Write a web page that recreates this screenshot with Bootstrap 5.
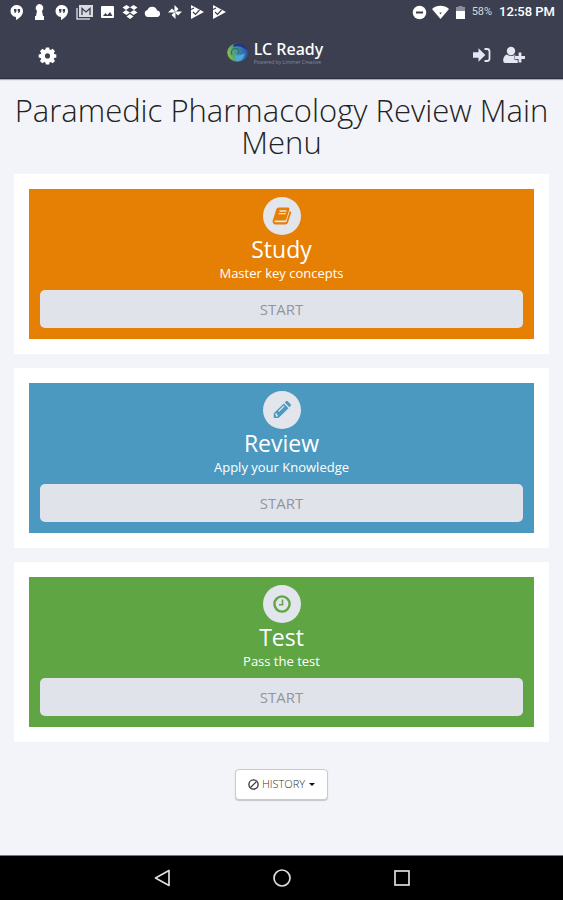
<!DOCTYPE html>
<html lang="en">
<head>
<meta charset="utf-8">
<meta name="viewport" content="width=device-width, initial-scale=1">
<title>LC Ready</title>
<link href="https://cdn.jsdelivr.net/npm/bootstrap@5.3.0/dist/css/bootstrap.min.css" rel="stylesheet">
<style>
body { font-family: "Open Sans", sans-serif; background: #f3f4f9; color: #222; }
svg { display: block; flex: none; }
.app-top { background: #3c3f50; color: #fff; border-bottom: 1px solid #2d303d; box-shadow: 0 1px 1px #a9abb4; }
.status-bar { height: 24px; padding: 0 8px 0 9px; font-family: Roboto, sans-serif; }
.status-icons { gap: 6px; }
.status-side { gap: 5px; }
.battery-text { font-size: 11px; color: #d5d7de; padding-right: 2px; }
.clock-text { font-size: 13px; font-weight: 500; }
.app-nav { height: 54px; padding: 8px 36px 0; }
.nav-side { flex: 1 1 0; }
.icon-btn { padding: 2px; line-height: 1; color: #e4e7f3; }
.icon-btn:hover { color: #fff; }
.brand { gap: 5px; color: #fff; padding: 0 14px 4px 0; }
.brand-name { font-family: "Noto Sans", sans-serif; font-size: 16px; line-height: 18px; font-weight: 500; }
.brand-tag { font-size: 5px; line-height: 8px; color: #85899a; }
.page-title { font-size: 31px; line-height: 32px; font-weight: 300; padding: 15px 8px 16px; }
.menu-list { padding: 0 14px; gap: 14px; }
.menu-card { background: #fff; padding: 15px; }
.panel { padding: 8px 11px 11px; color: #fff; }
.panel-study { background: #e68004; color: #e68004; }
.panel-review { background: #4b99c0; color: #4b99c0; }
.panel-test { background: #60a544; color: #60a544; }
.panel-icon { width: 38px; height: 38px; background: #e2e5ec; }
.panel-title { font-size: 23px; line-height: 28px; font-weight: 400; color: #fff; }
.panel-text { font-size: 13px; line-height: 20px; color: #fff; font-weight: 500; }
.start-btn { height: 38px; margin-top: 7px; padding: 0; background: #e0e4ea; color: #92959c; font-size: 15px; border-radius: 5px; border: 0; }
.start-btn:hover { background: #d5dae2; color: #7c8088; }
.history-btn { height: 31px; gap: 3px; padding: 0 12px; background: #fff; border: 1px solid #c9cad0; border-radius: 4px; font-size: 11px; font-weight: 300; color: #333; box-shadow: 0 1px 1px #c4c5ca; }
.history-btn::after { margin-left: 1px; color: #111; }
.history-row { padding: 27px 0; }
.system-nav { height: 45px; background: #000; border-top: 1px solid #777; }
.system-nav .btn { width: 120px; padding: 0; }
</style>
</head>
<body class="d-flex flex-column min-vh-100">
<svg class="d-none" aria-hidden="true">
  <symbol id="hangouts" viewBox="0 0 16 16"><path fill="#fff" d="M8 1a6 6 0 0 0-1 12v3c4-2 7-5 7-9a6 6 0 0 0-6-6z"/><path fill="#3c3f50" d="M5 5h2.400v2.500L6.300 9H5.300l.7-1.500H5zm3.700 0h2.400v2.500L10 9H9l.7-1.500h-1z"/></symbol>
  <symbol id="play" viewBox="0 0 16 16"><path fill="#fff" d="M2 1l13 7-13 7z"/><path fill="none" stroke="#3c3f50" stroke-width="1.200" d="M4 8l2.500 2.500L10.500 6M2 5.500l3-1.500"/></symbol>
</svg>

<header class="app-top">
  <div class="status-bar d-flex align-items-center justify-content-between">
    <div class="status-icons d-flex align-items-center" aria-hidden="true">
      <svg width="16" height="16"><use href="#hangouts"/></svg>
      <svg width="17" height="16" viewBox="0 0 17 16"><path fill="#fff" d="M8.500 0a4 4 0 0 1 2.500 7l1 5h1v4H4v-4h1l1-5a4 4 0 0 1 2.500-7z"/></svg>
      <svg width="16" height="16"><use href="#hangouts"/></svg>
      <svg width="17" height="16" viewBox="0 0 17 16"><path fill="none" stroke="#c9cbd3" stroke-width="1.500" d="M1 4v11h13"/><path fill="#d9dbe1" d="M3 1h14v12H3z"/><path fill="none" stroke="#3c3f50" stroke-width="1.300" d="M6 11V4.500L10 8l4-3.500V11"/></svg>
      <svg width="17" height="16" viewBox="0 0 17 16"><rect x="2" y="2" width="13" height="12" rx="1" fill="#fff"/><path fill="#3c3f50" d="M4 12l2.500-3 2 2 2.500-3 2.500 4z"/></svg>
      <svg width="16" height="16" viewBox="0 0 16 16"><path fill="#fff" d="M4.500 1L8 3.300 4 6 .5 3.500zM11.500 1l4 2.500L12 6 8 3.300zM4 6l4 2.500-3.500 2.500L.5 8.500zM12 6l3.500 2.500-4 2.500L8 8.500zM8 10l3.500 2.500L8 15l-3.500-2.500z"/></svg>
      <svg width="17" height="16" viewBox="0 0 17 16"><path fill="#fff" d="M4 13a3.500 3.500 0 0 1-.5-6.900A5 5 0 0 1 13 6.500 3.300 3.300 0 0 1 13.500 13z"/></svg>
      <svg width="16" height="16" viewBox="0 0 16 16"><g fill="#fff"><path d="M7.500 7.500V1L11.500 5 9 7.500z"/><path d="M8.500 7.500H15L11 11.500 8.500 9z"/><path d="M8.500 8.500V15L4.500 11l2.500-2.500z"/><path d="M7.500 8.500H1L5 4.500l2.500 2.500z"/></g></svg>
      <svg width="16" height="16"><use href="#play"/></svg>
      <svg width="16" height="16"><use href="#play"/></svg>
    </div>
    <div class="status-side d-flex align-items-center">
      <svg width="15" height="15" viewBox="0 0 15 15" aria-hidden="true"><circle cx="7.500" cy="7.500" r="6.800" fill="#fff"/><path stroke="#3c3f50" stroke-width="2" d="M4 7.500h7"/></svg>
      <svg width="17" height="14" viewBox="0 0 17 14" aria-hidden="true"><path fill="#fff" d="M0 4a13 13 0 0 1 17 0L8.500 14z"/><path fill="#3c3f50" d="M7.300 7.500h2.400L8.500 9.500z"/></svg>
      <svg width="13" height="15" viewBox="1 0 13 15" aria-hidden="true"><path fill="#8c8f9b" d="M5.500 1h4v1H12v4H3V2h2.500z"/><path fill="#fff" d="M3 6h9v8H3z"/></svg>
      <span class="battery-text">58%</span>
      <span class="clock-text">12:58 PM</span>
    </div>
  </div>
  <nav class="app-nav d-flex align-items-center" aria-label="Main">
    <div class="nav-side d-flex">
      <button type="button" class="btn icon-btn border-0" aria-label="Settings">
        <svg width="19" height="19" viewBox="0 0 20 20"><path fill="#fff" fill-rule="evenodd" d="M8.300 1.500h3.400l.5 2.200 1.200.5 2.100-1.200 2.400 2.400L16.600 7.300l.5 1.200 2.200.4v3.200l-2.200.5-.5 1.200 1.300 2-2.400 2.400-2.100-1.300-1.200.5-.5 2.200H8.300l-.5-2.200-1.200-.5-2.100 1.300-2.400-2.400 1.300-2-.5-1.200-2.200-.5V8.900l2.200-.4.5-1.200-1.300-1.900L4.500 3l2.100 1.200 1.200-.5zM10 7.700a2.700 2.700 0 1 0 0 5.400 2.700 2.700 0 0 0 0-5.400z"/></svg>
      </button>
    </div>
    <a href="#" class="brand d-flex align-items-center text-decoration-none">
      <svg width="23" height="22" viewBox="0 0 23 22" aria-hidden="true">
        <defs><linearGradient id="globe" x1="0" y1=".6" x2="1" y2=".4"><stop offset="0" stop-color="#8fbf4e"/><stop offset=".3" stop-color="#58a56c"/><stop offset=".5" stop-color="#3a8fb5"/><stop offset="1" stop-color="#2c50a8"/></linearGradient></defs>
        <ellipse cx="11.500" cy="10.500" rx="10.300" ry="9.200" fill="url(#globe)"/>
        <path fill="#26357f" d="M8 2c6-2 12 1 13.500 6-3-1-5-3-8-3.500C11 4 9 4 7 5z"/>
        <path fill="#4fa9d8" d="M9 13c4 1 7 0 10-2-1 5-4 8-8 8-2-1-3-3-2-6z"/>
        <path fill="none" stroke="#2f6f6c" stroke-width="1.200" d="M6 13C4 8 8 5 12 7c2 2 1 4-1 4.500"/>
      </svg>
      <span class="d-flex flex-column">
        <span class="brand-name">LC Ready</span>
        <span class="brand-tag">Powered by Limmer Creative</span>
      </span>
    </a>
    <div class="nav-side d-flex justify-content-end gap-2">
      <button type="button" class="btn icon-btn border-0" aria-label="Sign in">
        <svg width="18" height="18" viewBox="0 0 18 18"><path fill="currentColor" d="M0 6.300h5.500V2.200L12.300 9l-6.800 6.800v-4.100H0z"/><path fill="none" stroke="currentColor" stroke-width="1.800" d="M11.500 3H14a2.500 2.500 0 0 1 2.500 2.500v7A2.500 2.500 0 0 1 14 15h-2.500"/></svg>
      </button>
      <button type="button" class="btn icon-btn border-0" aria-label="Register">
        <svg width="22" height="18" viewBox="0 0 22 18"><circle cx="8" cy="5" r="4.200" fill="currentColor"/><path fill="currentColor" d="M4 8.500c2.500 2 5.500 2 8 0l1.500 1v4H16V17H2c-3 0-2.300-7.500 2-8.500z"/><path stroke="#3c3f50" stroke-width="4.600" d="M17 5.700v11.600M11.500 11.500H22"/><path stroke="currentColor" stroke-width="2.800" d="M17 6.500v10M12 11.500h10"/></svg>
      </button>
    </div>
  </nav>
</header>

<main class="flex-grow-1">
  <h1 class="page-title text-center mb-0">Paramedic Pharmacology Review Main Menu</h1>
  <div class="menu-list d-flex flex-column">
    <section class="menu-card">
      <div class="panel panel-study d-flex flex-column align-items-center">
        <div class="panel-icon rounded-circle d-flex align-items-center justify-content-center">
          <svg width="20" height="20" viewBox="0 0 20 20" aria-hidden="true"><path fill="currentColor" d="M7 1.500h9c1.200 0 1.700.9 1.400 1.900l-3 9.600c-.3 1-1 1.500-2 1.500H3.500c-1 0-1.300.6-1 1.100.2.500.8.700 1.500.7h9c.8 0 1.300-.4 1.600-1.200L17.800 5c1.200.5 1.500 1.200 1.200 2.200l-3 9.300c-.4 1.300-1.300 2-2.700 2H4c-2.300 0-4-2-3.300-4L4.200 3.700C4.600 2.300 5.500 1.500 7 1.500z"/><path stroke="#e2e5ec" stroke-width="1.300" d="M7.500 5h7M6.700 7.700h7"/></svg>
        </div>
        <h2 class="panel-title mb-0">Study</h2>
        <p class="panel-text mb-0">Master key concepts</p>
        <button type="button" class="btn start-btn w-100">START</button>
      </div>
    </section>
    <section class="menu-card">
      <div class="panel panel-review d-flex flex-column align-items-center">
        <div class="panel-icon rounded-circle d-flex align-items-center justify-content-center">
          <svg width="20" height="20" viewBox="0 0 20 20" aria-hidden="true"><path fill="currentColor" d="M11.800 3.500l4.700 4.700L6.500 18H1.800v-4.700zM12.800 2.500l1-1c.6-.6 1.500-.6 2.100 0l2.600 2.600c.5.500.5 1.400 0 2l-1.100 1.100z"/><path fill="none" stroke="#e2e5ec" stroke-width="1.200" d="M3 14.200h1.500v1.600H6M6.500 11.500l5.500-5.500"/></svg>
        </div>
        <h2 class="panel-title mb-0">Review</h2>
        <p class="panel-text mb-0">Apply your Knowledge</p>
        <button type="button" class="btn start-btn w-100">START</button>
      </div>
    </section>
    <section class="menu-card">
      <div class="panel panel-test d-flex flex-column align-items-center">
        <div class="panel-icon rounded-circle d-flex align-items-center justify-content-center">
          <svg width="20" height="20" viewBox="0 0 20 20" aria-hidden="true"><circle cx="10" cy="10" r="7.600" fill="none" stroke="currentColor" stroke-width="2.400"/><path fill="none" stroke="currentColor" stroke-width="1.600" d="M10.500 5.500v5.200H7"/></svg>
        </div>
        <h2 class="panel-title mb-0">Test</h2>
        <p class="panel-text mb-0">Pass the test</p>
        <button type="button" class="btn start-btn w-100">START</button>
      </div>
    </section>
  </div>
  <div class="history-row dropdown d-flex justify-content-center">
    <button type="button" class="btn history-btn dropdown-toggle d-flex align-items-center" data-bs-toggle="dropdown" aria-expanded="false">
      <svg width="11" height="11" viewBox="0 0 11 11" aria-hidden="true"><circle cx="5.500" cy="5.500" r="4.600" fill="none" stroke="#333" stroke-width="1.300"/><path stroke="#333" stroke-width="1.200" d="M2.500 8.500l6-6"/></svg>
      <span>HISTORY</span>
    </button>
  </div>
</main>

<footer class="system-nav d-flex align-items-center justify-content-center">
  <button type="button" class="btn border-0 d-flex justify-content-center" aria-label="Back"><svg width="18" height="18" viewBox="0 0 18 18"><path fill="none" stroke="#ddd" stroke-width="1.700" stroke-linejoin="round" d="M16 1.500v15L2.500 9z"/></svg></button>
  <button type="button" class="btn border-0 d-flex justify-content-center" aria-label="Home"><svg width="18" height="18" viewBox="0 0 18 18"><circle cx="9" cy="9" r="8" fill="none" stroke="#ddd" stroke-width="1.700"/></svg></button>
  <button type="button" class="btn border-0 d-flex justify-content-center" aria-label="Recent apps"><svg width="18" height="18" viewBox="0 0 18 18"><rect x="2" y="2" width="14" height="14" fill="none" stroke="#ddd" stroke-width="1.700"/></svg></button>
</footer>
<script src="https://cdn.jsdelivr.net/npm/bootstrap@5.3.0/dist/js/bootstrap.bundle.min.js"></script>
</body>
</html>
